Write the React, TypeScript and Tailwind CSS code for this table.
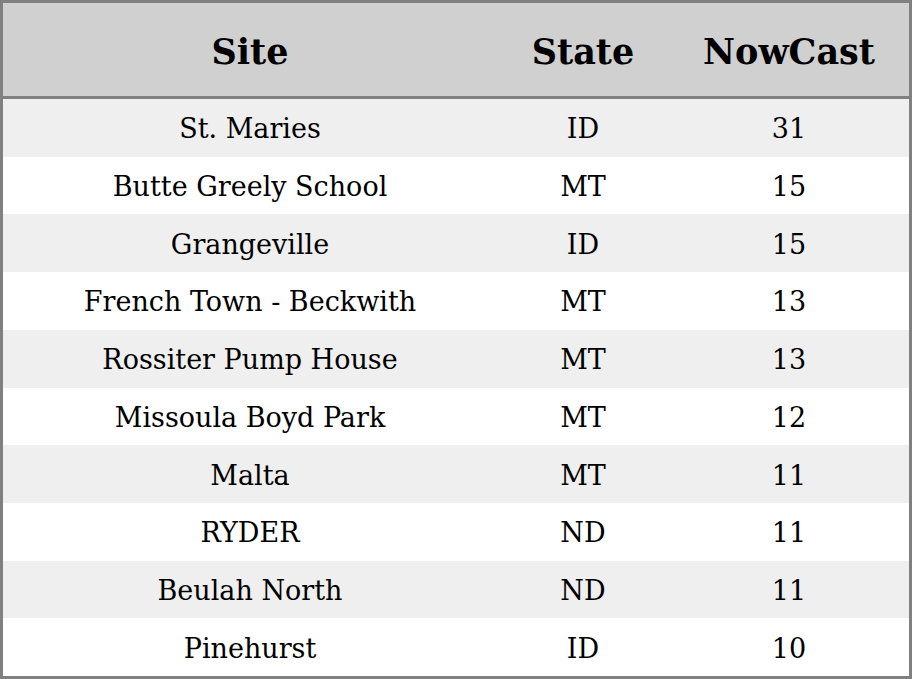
import React from 'react';

const rows = [
  { site: 'St. Maries', state: 'ID', value: 31 },
  { site: 'Butte Greely School', state: 'MT', value: 15 },
  { site: 'Grangeville', state: 'ID', value: 15 },
  { site: 'French Town - Beckwith', state: 'MT', value: 13 },
  { site: 'Rossiter Pump House', state: 'MT', value: 13 },
  { site: 'Missoula Boyd Park', state: 'MT', value: 12 },
  { site: 'Malta', state: 'MT', value: 11 },
  { site: 'RYDER', state: 'ND', value: 11 },
  { site: 'Beulah North', state: 'ND', value: 11 },
  { site: 'Pinehurst', state: 'ID', value: 10 },
];

const cols = 'grid grid-cols-[494px_172px_240px]';

export default function App() {
  return (
    <div
      className="w-[912px] h-[679px] border-[3px] border-[#808080] bg-white text-black flex flex-col"
      style={{ fontFamily: '"DejaVu Serif", serif' }}
    >
      {/* Header */}
      <div className={`${cols} h-[96px] shrink-0 bg-[#d0d0d0] border-b-[3px] border-[#808080] text-[35px] font-bold leading-none pt-[3px] items-center text-center`}>
        <div>Site</div>
        <div>State</div>
        <div>NowCast</div>
      </div>

      {/* Body */}
      <div className="flex-1 flex flex-col">
        {rows.map((r, i) => (
          <div
            key={i}
            className={`${cols} flex-1 items-center text-center text-[27px] leading-none pt-[2px] ${i % 2 === 0 ? 'bg-[#efefef]' : 'bg-white'}`}
          >
            <div>{r.site}</div>
            <div>{r.state}</div>
            <div>{r.value}</div>
          </div>
        ))}
      </div>
    </div>
  );
}
